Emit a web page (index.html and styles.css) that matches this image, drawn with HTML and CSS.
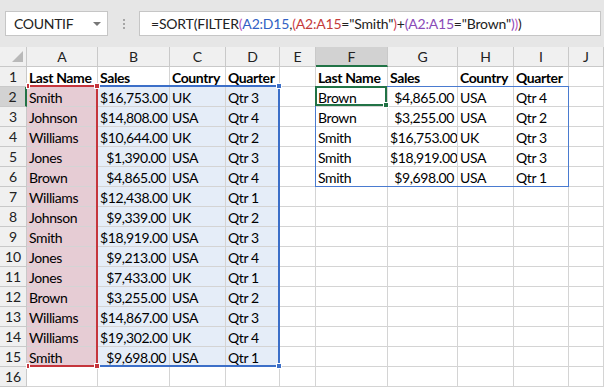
FILE: index.html
```html
<!DOCTYPE html>
<html>
<head>
  <title>SORT and FILTER</title>
  <link rel="stylesheet" href="styles.css">
</head>
<body>
  <div class="excel">
    <div class="formula-bar">
      <div class="name-box">
        <span class="name-text">COUNTIF</span>
        <span class="name-arrow"></span>
      </div>
      <div class="bar-grip"><span></span><span></span><span></span></div>
      <div class="formula-box">=SORT(FILTER<span class="paren-1">(</span><span class="ref-blue">A2:D15</span>,<span class="paren-2">(</span><span class="ref-red">A2:A15</span>="Smith"<span class="paren-2">)</span>+<span class="paren-3">(</span><span class="ref-purple">A2:A15</span>="Brown"<span class="paren-3">)</span><span class="paren-1">)</span>)</div>
    </div>

    <div class="sheet">
      <div class="grid"></div>

      <div class="range range-blue">
        <span class="handle handle-tr"></span>
        <span class="handle handle-br"></span>
      </div>
      <div class="range range-red">
        <span class="handle handle-tl"></span>
        <span class="handle handle-tr"></span>
        <span class="handle handle-bl"></span>
        <span class="handle handle-br"></span>
      </div>
      <div class="spill"></div>
      <div class="active-cell"><span class="fill-handle"></span></div>
    </div>
  </div>

  <script>
    const grid = document.querySelector('.grid');
    const letters = ['A', 'B', 'C', 'D', 'E', 'F', 'G', 'H', 'I', 'J'];

    const source = [
      ['Last Name', 'Sales', 'Country', 'Quarter'],
      ['Smith', '$16,753.00', 'UK', 'Qtr 3'],
      ['Johnson', '$14,808.00', 'USA', 'Qtr 4'],
      ['Williams', '$10,644.00', 'UK', 'Qtr 2'],
      ['Jones', '$1,390.00', 'USA', 'Qtr 3'],
      ['Brown', '$4,865.00', 'USA', 'Qtr 4'],
      ['Williams', '$12,438.00', 'UK', 'Qtr 1'],
      ['Johnson', '$9,339.00', 'UK', 'Qtr 2'],
      ['Smith', '$18,919.00', 'USA', 'Qtr 3'],
      ['Jones', '$9,213.00', 'USA', 'Qtr 4'],
      ['Jones', '$7,433.00', 'UK', 'Qtr 1'],
      ['Brown', '$3,255.00', 'USA', 'Qtr 2'],
      ['Williams', '$14,867.00', 'USA', 'Qtr 3'],
      ['Williams', '$19,302.00', 'UK', 'Qtr 4'],
      ['Smith', '$9,698.00', 'USA', 'Qtr 1']
    ];

    const result = [
      ['Last Name', 'Sales', 'Country', 'Quarter'],
      ['Brown', '$4,865.00', 'USA', 'Qtr 4'],
      ['Brown', '$3,255.00', 'USA', 'Qtr 2'],
      ['Smith', '$16,753.00', 'UK', 'Qtr 3'],
      ['Smith', '$18,919.00', 'USA', 'Qtr 3'],
      ['Smith', '$9,698.00', 'USA', 'Qtr 1']
    ];

    function addCell(text, className) {
      const cell = document.createElement('div');
      cell.className = className;
      cell.textContent = text;
      grid.appendChild(cell);
      return cell;
    }

    // header row
    const corner = addCell('', 'corner');
    corner.appendChild(document.createElement('span'));
    letters.forEach(letter => {
      addCell(letter, letter === 'F' ? 'col-head is-active' : 'col-head');
    });

    for (let row = 1; row <= 16; row++) {
      addCell(row, row === 2 ? 'row-head is-active' : 'row-head');

      letters.forEach((letter, c) => {
        let text = '';
        if (c < 4 && source[row - 1]) text = source[row - 1][c];
        if (c >= 5 && c <= 8 && result[row - 1]) text = result[row - 1][c - 5];

        let cls = 'cell';
        if (row === 1) cls += ' bold';
        if (row > 1 && (c === 1 || c === 6)) cls += ' num';
        if (row >= 2 && row <= 15 && c === 0) cls += ' fill-red';
        if (row >= 2 && row <= 15 && c >= 1 && c <= 3) cls += ' fill-blue';

        addCell(text, cls);
      });
    }
  </script>
</body>
</html>
```

FILE: styles.css
```css
body {
  margin: 0;
  background: #fff;
  font-family: Lato, "Open Sans", sans-serif;
  color: #000;
}

.excel {
  width: 604px;
  height: 387px;
  overflow: hidden;
}

/* formula bar */

.formula-bar {
  height: 47px;
  box-sizing: border-box;
  padding: 11px 3px 0 5px;
  background: #e6e6e6;
  display: flex;
  align-items: flex-start;
}

.name-box {
  width: 103px;
  height: 25px;
  box-sizing: border-box;
  padding: 0 6px 0 8px;
  border: 1px solid #c6c6c6;
  background: #fff;
  display: flex;
  align-items: center;
  justify-content: space-between;
  font-size: 14px;
  letter-spacing: -0.3px;
  color: #222;
}

.name-arrow {
  width: 0;
  height: 0;
  border-left: 4px solid transparent;
  border-right: 4px solid transparent;
  border-top: 4px solid #777;
}

.bar-grip {
  width: 31px;
  height: 25px;
  display: flex;
  flex-direction: column;
  align-items: center;
  justify-content: center;
  gap: 2px;
}

.bar-grip span {
  width: 2px;
  height: 2px;
  background: #a6a6a6;
}

.formula-box {
  flex: 1;
  height: 25px;
  box-sizing: border-box;
  padding-left: 11px;
  border: 1px solid #c6c6c6;
  background: #fff;
  font-size: 14px;
  letter-spacing: -0.2px;
  line-height: 23px;
  white-space: nowrap;
  color: #222;
}

.ref-blue { color: #3161c4; }
.ref-red { color: #c43a3a; }
.ref-purple { color: #8a4bb8; }
.paren-1 { color: #b657c0; }
.paren-2 { color: #d0434f; }
.paren-3 { color: #8a4bb8; }

/* sheet */

.sheet {
  position: relative;
}

.grid {
  display: grid;
  grid-template-columns: 27px 71px 72px 56px 54px 36px 72px 70px 56px 55px 1fr;
  grid-auto-rows: 20px;
}

.grid > div {
  box-sizing: border-box;
  border-right: 1px solid #d4d4d4;
  border-bottom: 1px solid #d4d4d4;
  overflow: hidden;
  white-space: nowrap;
  font-size: 14px;
  line-height: 20px;
}

.corner,
.col-head,
.row-head {
  background: #f0f0f0;
  color: #222;
  text-align: center;
}

.grid > .corner,
.grid > .col-head,
.grid > .row-head {
  border-color: #c9c9c9;
}

.corner {
  display: flex;
  align-items: flex-end;
  justify-content: flex-end;
  padding: 0 3px 4px 0;
}

.corner span {
  width: 0;
  height: 0;
  border-left: 11px solid transparent;
  border-bottom: 11px solid #b9b9b9;
}

.col-head.is-active {
  background: #d2d2d2;
  border-bottom: 2px solid #217346;
}

.row-head.is-active {
  background: #d2d2d2;
  border-right: 2px solid #217346;
}

.cell {
  padding: 1px 2px 0 2px;
  letter-spacing: -0.4px;
}

.bold {
  font-weight: bold;
}

.num {
  text-align: right;
  padding-right: 3px;
}

.fill-red {
  background: #e6ccd4;
}

.fill-blue {
  background: #e5edf8;
}

/* range finder borders */

.range {
  position: absolute;
  top: 38px;
  height: 282px;
  box-sizing: border-box;
  border-top: 2px solid;
  border-right: 2px solid;
  border-bottom: 2px solid;
}

.range-red {
  left: 27px;
  width: 71px;
  border-color: #c5353c;
}

.range-blue {
  left: 97px;
  width: 183px;
  border-color: #3c6fc8;
}

.handle {
  position: absolute;
  width: 6px;
  height: 6px;
  box-sizing: border-box;
  border: 1px solid #fff;
}

.range-red .handle {
  background: #c5353c;
}

.range-blue .handle {
  background: #3c6fc8;
}

.handle-tl { left: -1px; top: -4px; width: 4px; }
.handle-tr { right: -4px; top: -4px; }
.handle-bl { left: -1px; bottom: -4px; width: 4px; }
.handle-br { right: -4px; bottom: -4px; }

.spill {
  position: absolute;
  left: 315px;
  top: 39px;
  width: 254px;
  height: 101px;
  box-sizing: border-box;
  border: 1px solid #4a7bd0;
}

.active-cell {
  position: absolute;
  left: 315px;
  top: 39px;
  width: 72px;
  height: 20px;
  box-sizing: border-box;
  border: 2px solid #217346;
}

.fill-handle {
  position: absolute;
  right: -4px;
  bottom: -4px;
  width: 6px;
  height: 6px;
  box-sizing: border-box;
  background: #217346;
  border: 1px solid #fff;
}
```
